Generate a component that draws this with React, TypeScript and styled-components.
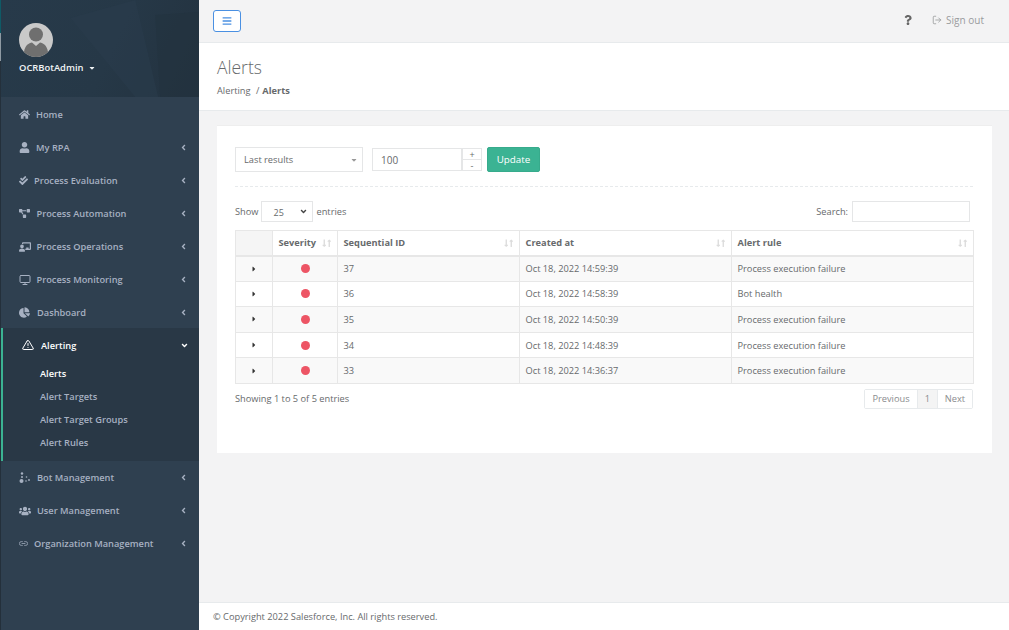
import React from "react";
import styled, { createGlobalStyle } from "styled-components";
import { FaHome, FaUser, FaCheckDouble, FaProjectDiagram, FaChalkboardTeacher, FaChartPie, FaUsers, FaBars, FaQuestion, FaCaretRight, FaAngleLeft, FaAngleDown, FaCaretDown, FaLongArrowAltUp, FaLongArrowAltDown } from "react-icons/fa";
import { FiAlertTriangle, FiLogOut, FiMonitor, FiLink2 } from "react-icons/fi";

const Global = createGlobalStyle`
  html, body { margin: 0; padding: 0; height: 100%; overflow: hidden; }
  body { font-family: "Open Sans", "Liberation Sans", sans-serif; font-size: 9.25px; color: #676a6c; background: #f3f3f4; }
  #root { height: 630px; }
  * { box-sizing: border-box; }
`;

const Page = styled.div`display: flex; height: 630px; width: 1009px;`;
const Sidebar = styled.aside`
  width: 199px; flex: none; background: #2f4050; display: flex; flex-direction: column;
  border-left: 1px solid #24303b;
  border-image: linear-gradient(#0f5a66 0 34px, #8f9aa3 34px 62px, #24303b 62px) 1;
`;
const Profile = styled.div`
  height: 97px; padding: 23px 0 0 18px; flex: none; position: relative; overflow: hidden;
  background: linear-gradient(115deg, #273a4a 0%, #263847 55%, #23323f 100%);
`;
const Decoration = styled.svg`position: absolute; inset: 0; width: 100%; height: 100%;`;
const Avatar = styled.svg`display: block; width: 34px; height: 34px; position: relative;`;
const UserName = styled.div`position: relative; margin-top: 4px; color: #f0f3f5; font-weight: 600; font-size: 9.4px; line-height: 13px; display: flex; align-items: center; gap: 5px;`;
const Nav = styled.nav`display: flex; flex-direction: column; padding-top: 1px;`;
const Item = styled.div<{ $active?: boolean; $gap: number }>`
  height: 33px; display: flex; align-items: center; padding: 0 11px 0 18px; gap: ${p => p.$gap}px;
  color: ${p => (p.$active ? "#fff" : "#a7b1c2")}; font-weight: 600; font-size: 9.25px;
  & > svg:first-child { flex: none; }
`;
const Label = styled.span`flex: 1; white-space: nowrap;`;
const Group = styled.div`background: #293846; border-left: 2px solid #3bb393; height: 133px; margin-top: -1px;`;
const GroupHead = styled(Item)`height: 34px; padding-left: 19px; padding-right: 10px;`;
const Sub = styled.div<{ $active?: boolean }>`
  height: 23px; display: flex; align-items: center; padding-left: 37px; font-size: 9.25px; font-weight: 600;
  color: ${p => (p.$active ? "#fff" : "#a7b1c2")};
`;
const SubList = styled.div``;
const Main = styled.main`flex: 1; display: flex; flex-direction: column; min-width: 0;`;
const TopBar = styled.header`height: 43px; flex: none; display: flex; align-items: center; padding: 0 25px 0 14px; justify-content: space-between; background: #f3f3f4; border-bottom: 1px solid #e7eaec;`;
const Burger = styled.button`width: 28px; height: 22px; padding: 0; display: flex; align-items: center; justify-content: center; background: #fff; border: 1px solid #4a90e2; border-radius: 3px; color: #4a90e2; font-size: 10px; margin-top: -1px;`;
const TopRight = styled.div`display: flex; align-items: center; gap: 19px; margin-top: -2px;`;
const SignOut = styled.span`display: flex; align-items: center; gap: 4px; color: #9a9c9e; font-weight: 500; font-size: 10px;`;
const Heading = styled.section`height: 68px; flex: none; background: #fff; border-bottom: 1px solid #e7eaec; padding: 12px 18px 0;`;
const Title = styled.h2`margin: 0; font-size: 17.5px; line-height: 24px; font-weight: 300; color: #676a6c;`;
const Crumbs = styled.div`margin-top: 5px; font-size: 9.25px; line-height: 13px; display: flex; gap: 3px; strong { font-weight: 700; }`;
const Content = styled.div`flex: 1; padding: 14px 17px 0 18px;`;
const Card = styled.div`height: 328px; background: #fff; padding: 21px 19px 0 18px; border-top: 1px solid #eee;`;
const FormRow = styled.div`display: flex; align-items: stretch; height: 25px;`;
const FakeSelect = styled.div`width: 128px; border: 1px solid #e5e6e7; display: flex; align-items: center; justify-content: space-between; padding: 0 4px 0 8px; color: #676a6c; font-size: 9.25px; svg { color: #999; font-size: 8px; }`;
const NumberBox = styled.div`width: 90px; margin-left: 9px; border: 1px solid #e5e6e7; display: flex; align-items: center; padding-left: 8px; font-size: 10px; margin-top: 1px; margin-bottom: 1px;`;
const Spin = styled.div`width: 20px; display: flex; flex-direction: column; margin-top: 1px; margin-bottom: 1px;`;
const SpinBtn = styled.div`flex: 1; border: 1px solid #e5e6e7; display: flex; align-items: center; justify-content: center; font-size: 9px; line-height: 1; & + & { border-top: none; }`;
const Update = styled.button`margin-left: 5px; width: 53px; background: #3bb393; border: 1px solid #37ab8c; color: #fff; border-radius: 2px; font-family: inherit; font-size: 9.8px; font-weight: 500; padding: 0;`;
const Divider = styled.div`margin-top: 14px; border-top: 1px dashed #e7eaec;`;
const ControlRow = styled.div`display: flex; justify-content: space-between; align-items: center; margin-top: 14px; height: 21px; padding-right: 3px;`;
const ShowGroup = styled.div`display: flex; align-items: center; gap: 3px; font-size: 9.25px;`;
const LengthSelect = styled.div`width: 52px; height: 21px; border: 1px solid #e5e6e7; display: flex; align-items: center; justify-content: space-between; padding: 2px 4px 0 11px; font-size: 9px; svg { font-size: 9px; color: #444; margin-top: -2px; }`;
const SearchInput = styled.div`width: 118px; height: 21px; border: 1px solid #e5e6e7; margin-left: 1px;`;
const Table = styled.table`width: 738px; margin-top: 8px; border-collapse: collapse; table-layout: fixed; font-size: 9.25px;`;
const Th = styled.th<{ $w: number; $blank?: boolean }>`
  width: ${p => p.$w}px; height: 25px; border: 1px solid #e7e7e7; border-bottom: 2px solid #e7e7e7; padding: 0 6px 0 5.5px; text-align: left; font-weight: 700; color: #676a6c;
  background: ${p => (p.$blank ? "#f5f5f5" : "#fff")}; font-size: 9.25px;
`;
const ThInner = styled.div`display: flex; justify-content: space-between; align-items: center;`;
const SortIcon = styled.span`display: inline-flex; color: #dcdcdc; font-size: 8.5px; svg { margin: 0 -2px; }`;
const Row = styled.tr<{ $odd: boolean }>`background: ${p => (p.$odd ? "#f9f9f9" : "#fff")};`;
const Td = styled.td<{ $center?: boolean }>`height: 25.6px; border: 1px solid #e7e7e7; padding: 0 5px 0 5.5px; text-align: ${p => (p.$center ? "center" : "left")}; color: #676a6c; font-size: 9.25px; svg { display: block; margin: 0 auto; color: #333; font-size: 8px; }`;
const Dot = styled.span`display: block; width: 9px; height: 9px; border-radius: 50%; background: #ed5565; margin: 0 auto;`;
const FootRow = styled.div`display: flex; justify-content: space-between; align-items: center; width: 738px; margin-top: 5px;`;
const Pager = styled.div`display: flex; height: 20px; border: 1px solid #e7eaec; border-radius: 2px; color: #8a8c8e; font-size: 9.25px;`;
const PageCell = styled.span<{ $current?: boolean; $w: number }>`
  width: ${p => p.$w}px; display: flex; align-items: center; justify-content: center;
  background: ${p => (p.$current ? "#f4f4f4" : "#fff")}; & + & { border-left: 1px solid #e7eaec; }
`;
const Footer = styled.footer`height: 28px; flex: none; background: #fff; border-top: 1px solid #e7eaec; display: flex; align-items: center; padding-left: 14px; font-size: 9.25px;`;

const BotIcon = () => (
  <svg width="12" height="12" viewBox="0 0 12 12" fill="currentColor">
    <circle cx="2.5" cy="9" r="2" /><circle cx="3" cy="1.5" r="1.2" /><circle cx="3" cy="5" r="1" />
    <circle cx="7.5" cy="5" r=".8" /><circle cx="10" cy="8" r=".9" /><circle cx="7" cy="9" r=".8" />
  </svg>
);
const Chevron = () => <FaAngleLeft size={9} />;
const Sort = () => <SortIcon><FaLongArrowAltDown /><FaLongArrowAltUp /></SortIcon>;

const nav1 = [
  { icon: <FaHome size={11} />, label: "Home", gap: 6, plain: true },
  { icon: <FaUser size={11} />, label: "My RPA", gap: 6 },
  { icon: <FaCheckDouble size={9} />, label: "Process Evaluation", gap: 6 },
  { icon: <FaProjectDiagram size={11} />, label: "Process Automation", gap: 6.5 },
  { icon: <FaChalkboardTeacher size={12} />, label: "Process Operations", gap: 5.5 },
  { icon: <FiMonitor size={12} />, label: "Process Monitoring", gap: 5.5 },
  { icon: <FaChartPie size={11} />, label: "Dashboard", gap: 7 },
];
const nav2 = [
  { icon: <BotIcon />, label: "Bot Management", gap: 6 },
  { icon: <FaUsers size={12} />, label: "User Management", gap: 6 },
  { icon: <FiLink2 size={9} />, label: "Organization Management", gap: 6 },
];
const rows = [
  ["37", "Oct 18, 2022 14:59:39", "Process execution failure"],
  ["36", "Oct 18, 2022 14:58:39", "Bot health"],
  ["35", "Oct 18, 2022 14:50:39", "Process execution failure"],
  ["34", "Oct 18, 2022 14:48:39", "Process execution failure"],
  ["33", "Oct 18, 2022 14:36:37", "Process execution failure"],
];

export default function App() {
  return (
    <Page>
      <Global />
      <Sidebar>
        <Profile>
          <Decoration viewBox="0 0 199 97" preserveAspectRatio="none">
            <polygon points="70,18 135,0 158,97 135,97" fill="#2a3d4d" opacity=".55" />
            <polygon points="155,15 199,12 199,97 160,97" fill="#22313e" opacity=".5" />
          </Decoration>
          <Avatar viewBox="0 0 34 34">
            <circle cx="17" cy="17" r="17" fill="#c9c9c9" />
            <circle cx="17" cy="11.5" r="7" fill="#6f6f6f" />
            <path d="M5 29 C6 22 10 20 13 19.5 L17 23 L21 19.5 C24 20 28 22 29 29 A17 17 0 0 1 5 29Z" fill="#6f6f6f" />
          </Avatar>
          <UserName>OCRBotAdmin <FaCaretDown size={8} /></UserName>
        </Profile>
        <Nav>
          {nav1.map(n => (
            <Item key={n.label} $gap={n.gap}>
              {n.icon}<Label>{n.label}</Label>{!n.plain && <Chevron />}
            </Item>
          ))}
          <Group>
            <GroupHead $active $gap={7}>
              <FiAlertTriangle size={12} /><Label>Alerting</Label><FaAngleDown size={9} />
            </GroupHead>
            <SubList>
              <Sub $active>Alerts</Sub>
              <Sub>Alert Targets</Sub>
              <Sub>Alert Target Groups</Sub>
              <Sub>Alert Rules</Sub>
            </SubList>
          </Group>
          {nav2.map(n => (
            <Item key={n.label} $gap={n.gap}>
              {n.icon}<Label>{n.label}</Label><Chevron />
            </Item>
          ))}
        </Nav>
      </Sidebar>
      <Main>
        <TopBar>
          <Burger aria-label="Toggle menu"><FaBars /></Burger>
          <TopRight>
            <FaQuestion size={10} color="#666" />
            <SignOut><FiLogOut size={10} />Sign out</SignOut>
          </TopRight>
        </TopBar>
        <Heading>
          <Title>Alerts</Title>
          <Crumbs><span>Alerting</span><span>&nbsp;/</span><strong>Alerts</strong></Crumbs>
        </Heading>
        <Content>
          <Card>
            <FormRow>
              <FakeSelect>Last results <FaCaretDown /></FakeSelect>
              <NumberBox>100</NumberBox>
              <Spin><SpinBtn>+</SpinBtn><SpinBtn>-</SpinBtn></Spin>
              <Update>Update</Update>
            </FormRow>
            <Divider />
            <ControlRow>
              <ShowGroup>Show <LengthSelect>25 <FaAngleDown /></LengthSelect> entries</ShowGroup>
              <ShowGroup>Search: <SearchInput /></ShowGroup>
            </ControlRow>
            <Table>
              <thead>
                <tr>
                  <Th $w={37} $blank />
                  <Th $w={65}><ThInner>Severity <Sort /></ThInner></Th>
                  <Th $w={182}><ThInner>Sequential ID <Sort /></ThInner></Th>
                  <Th $w={212}><ThInner>Created at <Sort /></ThInner></Th>
                  <Th $w={242}><ThInner>Alert rule <Sort /></ThInner></Th>
                </tr>
              </thead>
              <tbody>
                {rows.map((r, i) => (
                  <Row key={r[0]} $odd={i % 2 === 0}>
                    <Td $center><FaCaretRight /></Td>
                    <Td $center><Dot /></Td>
                    <Td>{r[0]}</Td>
                    <Td>{r[1]}</Td>
                    <Td>{r[2]}</Td>
                  </Row>
                ))}
              </tbody>
            </Table>
            <FootRow>
              <span>Showing 1 to 5 of 5 entries</span>
              <Pager>
                <PageCell $w={52}>Previous</PageCell>
                <PageCell $w={20} $current>1</PageCell>
                <PageCell $w={35}>Next</PageCell>
              </Pager>
            </FootRow>
          </Card>
        </Content>
        <Footer>© Copyright 2022 Salesforce, Inc. All rights reserved.</Footer>
      </Main>
    </Page>
  );
}
